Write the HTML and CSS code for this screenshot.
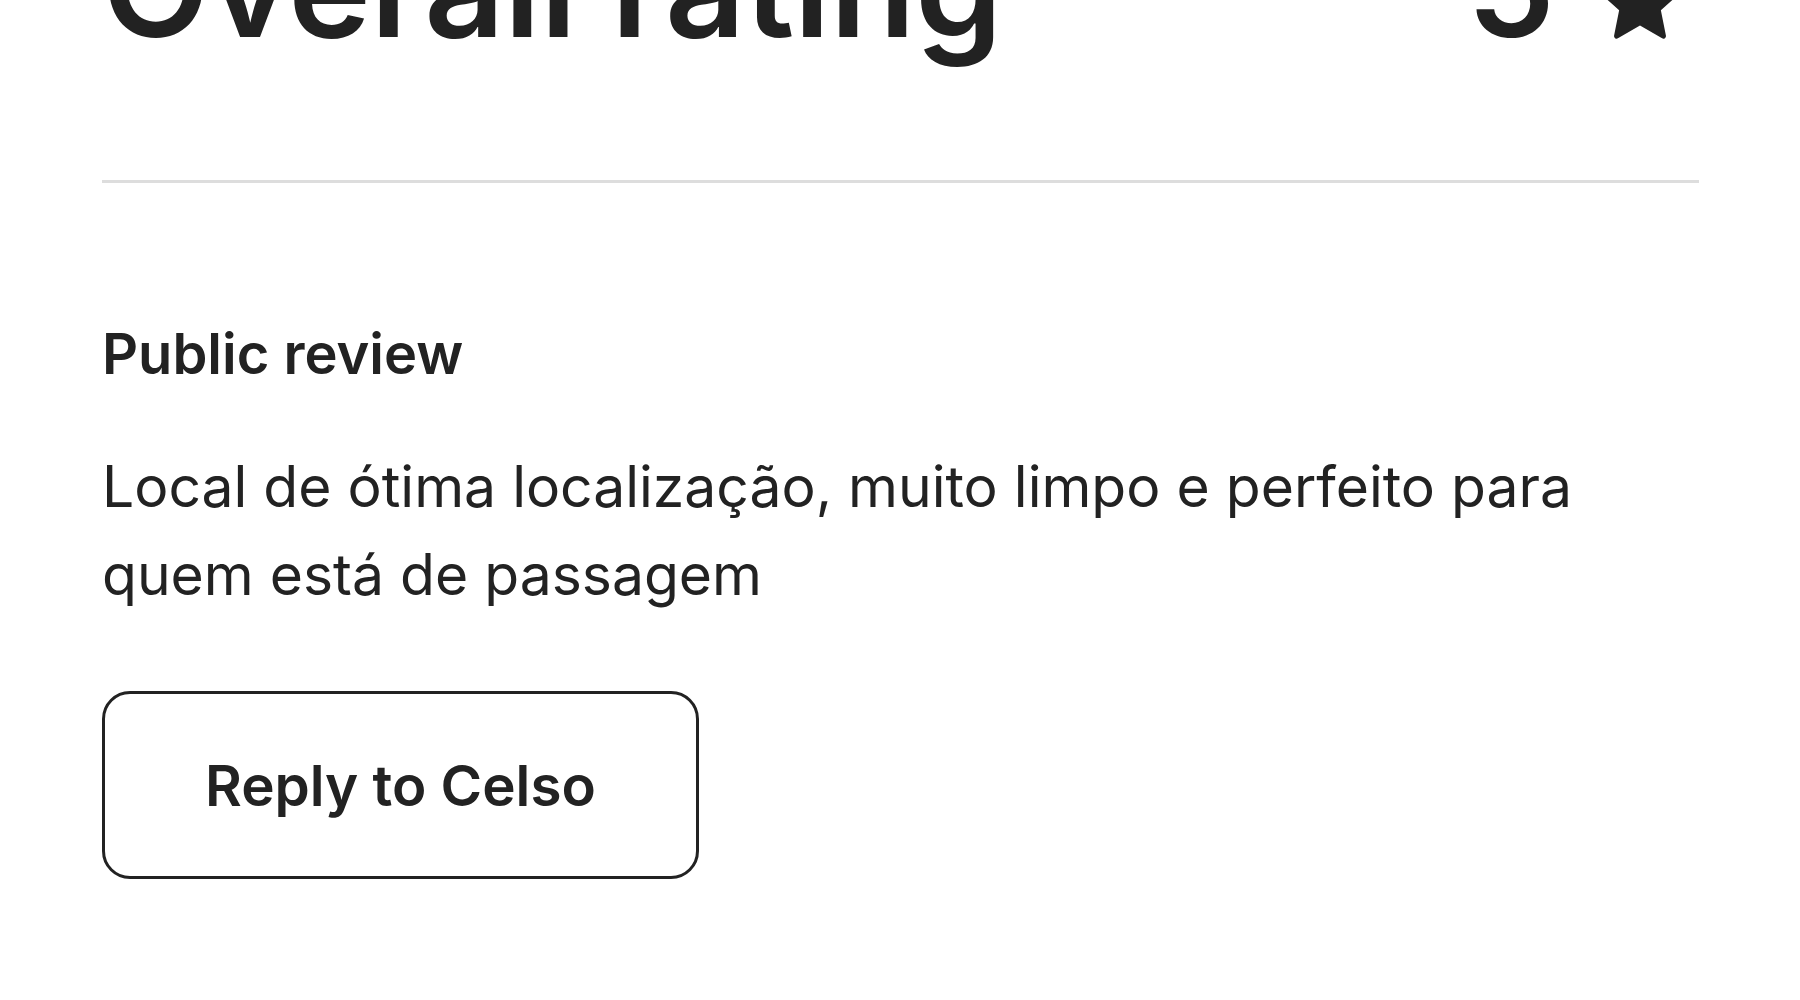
FILE: index.html
```html
<!DOCTYPE html>
<html lang="pt">
<head>
<meta charset="utf-8">
<title>Overall rating</title>
<link rel="stylesheet" href="styles.css">
</head>
<body>
<main class="page">
  <header class="rating-row">
    <h1 class="rating-title">Overall rating</h1>
    <div class="rating-score">
      <span class="score-num">5</span>
      <svg class="score-star" viewBox="0 0 32 32" aria-hidden="true"><path d="M15.094 1.579l-4.124 8.885-9.86 1.27a1 1 0 0 0-.542 1.736l7.293 6.565-1.965 9.852a1 1 0 0 0 1.483 1.061L16 25.951l8.625 4.997a1 1 0 0 0 1.482-1.06l-1.965-9.853 7.293-6.565a1 1 0 0 0-.541-1.735l-9.86-1.271-4.127-8.885a1 1 0 0 0-1.814 0z"/></svg>
    </div>
  </header>
  <hr class="divider">
  <section class="review">
    <h2 class="review-label">Public review</h2>
    <p class="review-text">Local de ótima localização, muito limpo e perfeito para quem está de passagem</p>
    <button class="reply-btn" type="button">Reply to Celso</button>
  </section>
</main>
</body>
</html>
```

FILE: styles.css
```css
html, body {
  margin: 0;
  padding: 0;
  background: #ffffff;
}
body {
  font-family: Inter, "Liberation Sans", sans-serif;
  color: #222222;
  overflow: hidden;
}
.page {
  padding: 0 101px 0 102px;
}
.rating-row {
  display: flex;
  justify-content: space-between;
  align-items: baseline;
  margin-top: -84px;
}
.rating-title {
  margin: 0;
  font-size: 140px;
  line-height: 1;
  font-weight: 600;
  letter-spacing: -0.5px;
}
.rating-score {
  display: flex;
  align-items: baseline;
  gap: 44px;
  font-size: 140px;
  line-height: 1;
  font-weight: 600;
  margin-right: 18px;
}
.score-star {
  width: 82px;
  height: 82px;
  fill: #222222;
  align-self: baseline;
  position: relative;
  top: 4px;
}
.divider {
  margin: 124px 0 0;
  border: 0;
  height: 3px;
  background: #dddddd;
}
.review {
  padding-top: 135px;
}
.review-label {
  margin: 0;
  font-size: 56px;
  line-height: 72px;
  font-weight: 600;
}
.review-text {
  margin: 53px 0 0;
  font-size: 57px;
  line-height: 88px;
  font-weight: 400;
  max-width: 1520px;
}
.reply-btn {
  margin-top: 72px;
  height: 188px;
  box-sizing: border-box;
  padding: 0 100px;
  background: #ffffff;
  border: 3px solid #222222;
  border-radius: 28px;
  font-family: Inter, "Liberation Sans", sans-serif;
  font-size: 56.5px;
  font-weight: 600;
  color: #222222;
}
```
